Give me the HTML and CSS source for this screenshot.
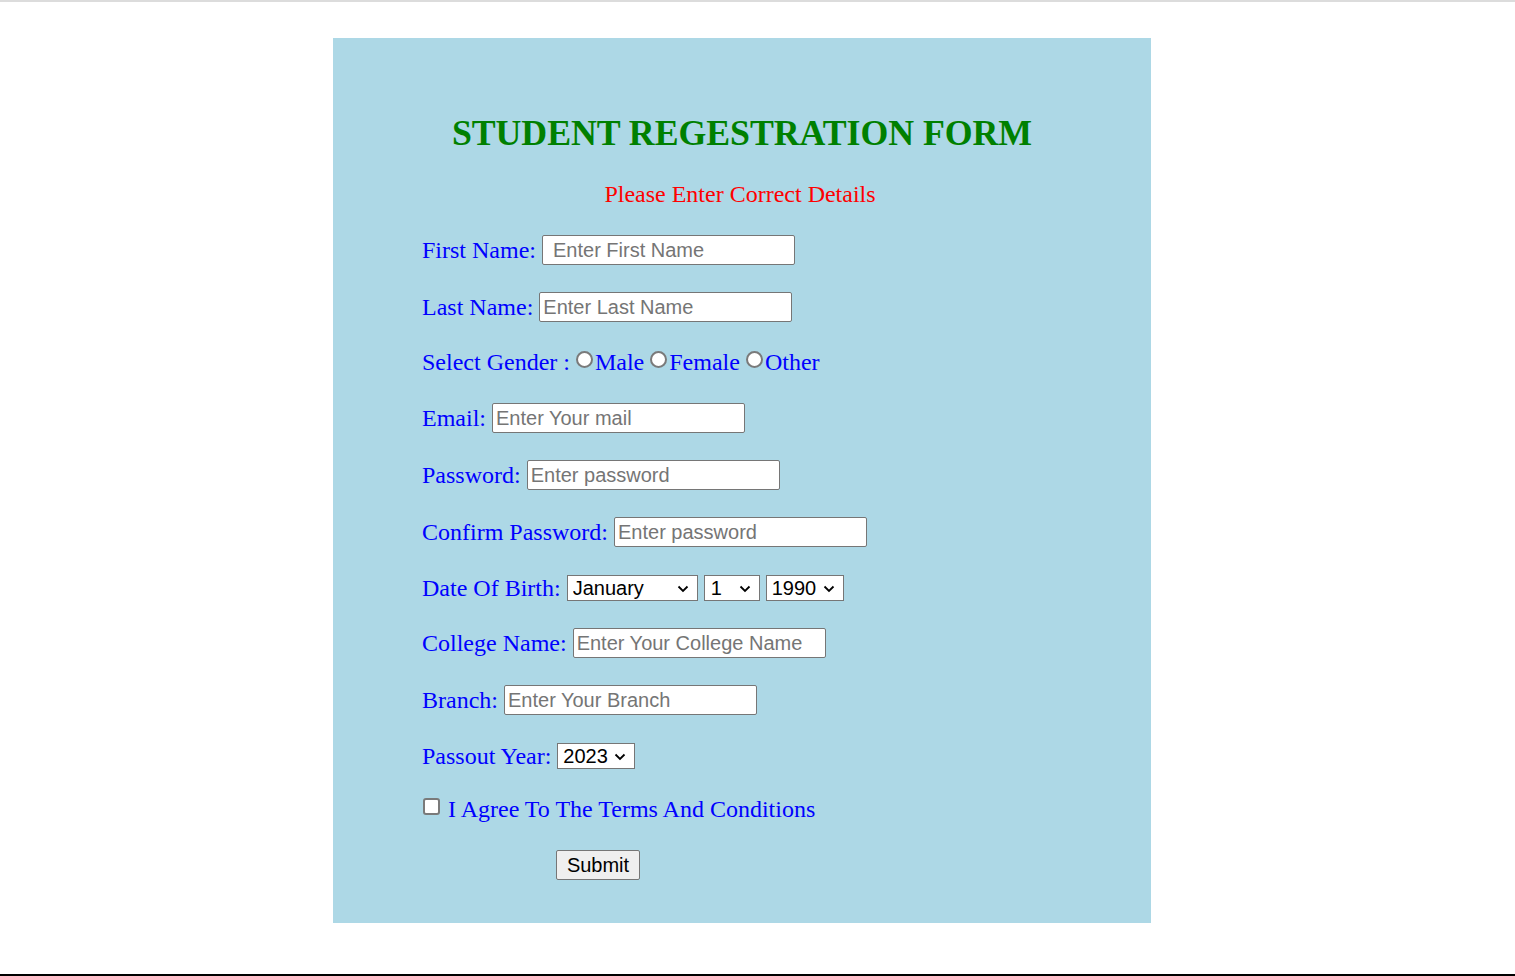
FILE: index.html
```html
<!DOCTYPE html>
<html lang="en">
<head>
<meta charset="utf-8">
<title>Student Registration Form</title>
<link rel="stylesheet" href="styles.css">
</head>
<body>
<div class="topline"></div>
<main class="page">
  <form class="card">
    <h1 class="title">STUDENT REGESTRATION FORM</h1>
    <p class="subtitle">Please Enter Correct Details</p>
    <div class="rows">
      <div class="row"><label>First Name:</label><input type="text" class="field field-first" placeholder="Enter First Name"></div>
      <div class="row sh-p1"><label>Last Name:</label><input type="text" class="field" placeholder="Enter Last Name"></div>
      <div class="row gender sh-m1">
        <label>Select Gender :</label>
        <input type="radio" name="g" class="radio"><span class="opt">Male</span>
        <input type="radio" name="g" class="radio"><span class="opt">Female</span>
        <input type="radio" name="g" class="radio"><span class="opt">Other</span>
      </div>
      <div class="row"><label>Email:</label><input type="email" class="field" placeholder="Enter Your mail"></div>
      <div class="row sh-p1"><label>Password:</label><input type="password" class="field" placeholder="Enter password"></div>
      <div class="row sh-p1"><label>Confirm Password:</label><input type="password" class="field" placeholder="Enter password"></div>
      <div class="row">
        <label>Date Of Birth:</label>
        <span class="selwrap"><select class="sel sel-month"><option>January</option><option>February</option><option>September</option></select><svg class="chev" width="12" height="8" viewBox="0 0 12 8"><path d="M1.5 1.5 L6 6 L10.5 1.5" fill="none" stroke="#000" stroke-width="1.8"/></svg></span>
        <span class="selwrap"><select class="sel sel-day"><option>1</option><option>2</option><option>31</option></select><svg class="chev" width="12" height="8" viewBox="0 0 12 8"><path d="M1.5 1.5 L6 6 L10.5 1.5" fill="none" stroke="#000" stroke-width="1.8"/></svg></span>
        <span class="selwrap"><select class="sel sel-year"><option>1990</option><option>1991</option></select><svg class="chev" width="12" height="8" viewBox="0 0 12 8"><path d="M1.5 1.5 L6 6 L10.5 1.5" fill="none" stroke="#000" stroke-width="1.8"/></svg></span>
      </div>
      <div class="row sh-m1"><label>College Name:</label><input type="text" class="field" placeholder="Enter Your College Name"></div>
      <div class="row sh-p1"><label>Branch:</label><input type="text" class="field" placeholder="Enter Your Branch"></div>
      <div class="row"><label>Passout Year:</label><span class="selwrap"><select class="sel sel-year sel-pass"><option>2023</option><option>2024</option></select><svg class="chev" width="12" height="8" viewBox="0 0 12 8"><path d="M1.5 1.5 L6 6 L10.5 1.5" fill="none" stroke="#000" stroke-width="1.8"/></svg></span></div>
      <div class="row agree sh-m3"><input type="checkbox" class="check"><label>I Agree To The Terms And Conditions</label></div>
      <div class="row submit-row"><button type="button" class="submit">Submit</button></div>
    </div>
  </form>
</main>
<div class="bottomline"></div>
</body>
</html>
```

FILE: styles.css
```css
html, body {
  margin: 0;
  padding: 0;
  background: #ffffff;
}
body {
  height: 976px;
  display: flex;
  flex-direction: column;
  font-family: "Liberation Serif", "Times New Roman", serif;
  overflow: hidden;
}
.topline {
  height: 2px;
  background: #dcdcdc;
  flex: none;
}
.page {
  flex: 1;
}
.bottomline {
  height: 2px;
  background: #000000;
  flex: none;
}
.card {
  margin: 36px 0 0 333px;
  width: 818px;
  height: 885px;
  box-sizing: border-box;
  background: #add8e6;
  padding-top: 75px;
}
.title {
  margin: 0;
  text-align: center;
  color: #008000;
  font-family: "Liberation Serif", "Times New Roman", serif;
  font-weight: bold;
  font-size: 35.8px;
  line-height: 40px;
  letter-spacing: -0.05px;
}
.subtitle {
  margin: 27px 0 0 0;
  text-align: center;
  color: #ff0000;
  font-size: 24px;
  line-height: 28px;
  padding-right: 4px;
}
.rows {
  margin-top: 27px;
  padding-left: 89px;
  display: flex;
  flex-direction: column;
  gap: 26px;
}
.row {
  height: 30px;
  flex: none;
  display: flex;
  align-items: center;
  color: #0000ff;
  font-size: 24px;
  line-height: 28px;
}
.row.sh-p1 { margin-top: 1px; }
.row.sh-m1 { margin-top: -1px; }
.row.sh-m3 { margin-top: -3px; }
.row label {
  margin-right: 6px;
}
.field {
  flex: none;
  width: 253px;
  height: 30px;
  box-sizing: border-box;
  font-family: "Liberation Sans", Arial, sans-serif;
  font-size: 20px;
  padding: 1px 3px;
  margin: 0;
  background: #ffffff;
  border: 1px solid #767676;
  border-radius: 2px;
  color: #000;
}
.field::placeholder {
  color: #757575;
}
.field-first {
  padding-left: 10px;
}
.selwrap {
  flex: none;
  position: relative;
  display: inline-flex;
  margin-right: 6px;
}
.sel {
  -webkit-appearance: none;
  appearance: none;
  height: 26px;
  box-sizing: border-box;
  font-family: "Liberation Sans", Arial, sans-serif;
  font-size: 20px;
  line-height: 22px;
  margin: 0;
  padding: 0 0 0 5px;
  border: 1px solid #767676;
  border-radius: 0;
  background: #ffffff;
  color: #000;
}
.chev {
  position: absolute;
  right: 9px;
  top: 10px;
  pointer-events: none;
}
.sel-month { width: 131px; }
.sel-day { width: 56px; padding-left: 6px; }
.sel-year { width: 78px; }
.sel-pass { width: 78px; }
.gender label {
  margin-right: 6px;
}
.radio {
  -webkit-appearance: none;
  appearance: none;
  flex: none;
  display: block;
  width: 17px;
  height: 17px;
  min-width: 17px;
  box-sizing: border-box;
  border: 2px solid #7a7a7a;
  border-radius: 50%;
  background: #ffffff;
  margin: -6px 2px 0 0;
}
.opt {
  margin-right: 6px;
}
.check {
  -webkit-appearance: none;
  appearance: none;
  flex: none;
  display: block;
  width: 17px;
  height: 17px;
  min-width: 17px;
  box-sizing: border-box;
  border: 2px solid #7a7a7a;
  border-radius: 3px;
  background: #ffffff;
  margin: -6px 8px 0 1px;
}
.agree label {
  margin: 0;
}
.submit-row {
  padding-left: 134px;
}
.submit {
  flex: none;
  width: 84px;
  height: 30px;
  font-family: "Liberation Sans", Arial, sans-serif;
  font-size: 20px;
  padding: 0;
  background: #efefef;
  border: 1px solid #767676;
  border-radius: 2px;
  color: #000;
}
```
